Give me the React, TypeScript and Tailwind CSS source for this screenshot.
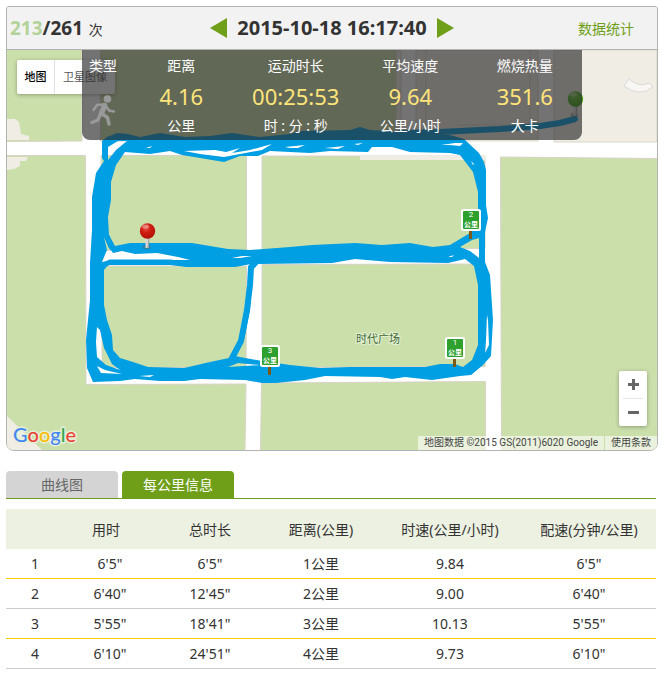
const stats = [
  { label: "距离", value: "4.16", unit: "公里" },
  { label: "运动时长", value: "00:25:53", unit: "时 : 分 : 秒" },
  { label: "平均速度", value: "9.64", unit: "公里/小时" },
  { label: "燃烧热量", value: "351.6", unit: "大卡" },
];

const laps = [
  ["1", `6'5"`, `6'5"`, "1公里", "9.84", `6'5"`],
  ["2", `6'40"`, `12'45"`, "2公里", "9.00", `6'40"`],
  ["3", `5'55"`, `18'41"`, "3公里", "10.13", `5'55"`],
  ["4", `6'10"`, `24'51"`, "4公里", "9.73", `6'10"`],
];

const ROUTE = "#009ee2";

function KmSign({ x, y, n }: { x: number; y: number; n: number }) {
  return (
    <g transform={`translate(${x} ${y})`}>
      <rect x="8" y="20" width="3" height="10" fill="#7a5a17" />
      <rect width="20" height="22" rx="2.5" fill="#fff" />
      <rect x="2" y="2" width="16" height="18" rx="1" fill="#2ea02e" />
      <text x="10" y="8" textAnchor="middle" fontSize="8" fill="#fff" className="font-['Roboto',sans-serif]">
        {n}
      </text>
      <text
        x="10"
        y="18"
        textAnchor="middle"
        fontSize="7"
        fill="#fff"
        className="font-['Noto_Sans_CJK_SC',sans-serif] font-bold"
      >
        公里
      </text>
    </g>
  );
}

function Pin({ x, y, fill }: { x: number; y: number; fill: string }) {
  return (
    <g transform={`translate(${x} ${y})`}>
      <ellipse cx="-1" cy="16" rx="4" ry="2.5" fill="#666" opacity=".45" />
      <path d="M-2 7h4l-1 10h-3z" fill="#d8d8d8" />
      <path d="M1 7h1l-1 10h-1z" fill="#999" />
      <circle r="7.7" fill={`url(#${fill})`} />
      <ellipse cx="-2" cy="-4.5" rx="3.5" ry="2" fill="#fff" opacity=".35" />
    </g>
  );
}

function Runner() {
  return (
    <svg viewBox="0 0 26 31" className="mt-3.5 h-[31px] w-[26px]" role="img" aria-label="跑步">
      <circle cx="17.500" cy="4" r="3.800" fill="#999" />
      <g fill="none" stroke="#999" strokeLinecap="round" strokeLinejoin="round">
        <path d="M14.500 10.500L11.500 18.500" strokeWidth="5.500" />
        <path d="M13.500 9.500L7 10L3.500 15" strokeWidth="2.600" />
        <path d="M16 11L19 15.500L24 16.500" strokeWidth="2.600" />
        <path d="M12 19L17.500 22.500L19 29" strokeWidth="3.400" />
        <path d="M10.500 19L8 25L2 27.500" strokeWidth="3.400" />
      </g>
    </svg>
  );
}

function MapArt() {
  return (
    <svg
      viewBox="7 50 650 400"
      preserveAspectRatio="xMidYMid slice"
      className="block h-[400px] w-full"
      aria-label="运动轨迹地图"
    >
      <defs>
        <radialGradient id="redPin" cx=".4" cy=".3" r=".7">
          <stop offset="0" stopColor="#e8584c" />
          <stop offset=".45" stopColor="#d01c10" />
          <stop offset="1" stopColor="#b01208" />
        </radialGradient>
        <radialGradient id="greenPin" cx=".4" cy=".3" r=".7">
          <stop offset="0" stopColor="#6cc83c" />
          <stop offset="1" stopColor="#3f9a14" />
        </radialGradient>
      </defs>

      <rect x="7" y="50" width="650" height="400" fill="#fff" />

      {/* city blocks */}
      <g fill="#cbdfab" stroke="#dad2c8">
        <path d="M6 49H82V141L6 141.500Z" />
        <path d="M6 155.500H85.500L86 384.500L246 384L245 451H6Z" />
        <path d="M100.500 49H396V141H100.500Z" />
        <path d="M101 155.500H246.500V250.500H101Z" />
        <path d="M262 156H485V248.500L262 249.500Z" />
        <path d="M102 266H246.500L246 367.500H102Z" />
        <path d="M262 264.500L485 264V366.500L262 367.500Z" />
        <path d="M261.500 383L485.500 381.500V451H260.500Z" />
        <path d="M500.500 157L658 158.500V451H501.500Z" />
      </g>
      <path d="M396 50H401V141H396ZM416 50H538V141H416ZM554 50H657V142H554Z" fill="#f0ede5" stroke="#ddd6ca" />
      <path d="M426 50V141M455 125H538M530 50V125" fill="none" stroke="#ded9cf" />
      <path d="M360 156H485V160H360Z" fill="#f0ede5" />
      <path d="M7 119H15L19 122L21 134L29 136V140H7Z" fill="#f0ede5" />
      <path d="M7 157H28L26 161H20L20 166L14 169L7 170Z" fill="#f0ede5" />
      <path d="M7 416L42 450H7Z" fill="#f0ede5" />
      <path d="M624 86L629 79Q639 88 649 83L653 87Q640 98 624 86Z" fill="#f8f7f3" stroke="#d9d9dc" />

      {/* recorded track */}
      <g fill={ROUTE}>
        <path
          fillRule="evenodd"
          d="M102 141L107 137L117 133L128 134L140 137L160 133L185 137L210 136L232 133L260 137L290 134L300 131L350 130L360 127L370 130L405 132L450 135L464 139L479 153L484 162L486 170V205L488 218L485 232V262L490 275L493 320L491 356L483 365L471 375L460 376L432 380L405 377L392 379L380 377L325 376L305 380L276 383H262L245 380L200 379L184 381H160L135 379L120 381L93 382L87 368L86 340L90 300V263L92 230V197L96 173L104 161L102 158Z
          M108 160L116 150L127 141H118L108 147Z
          M116 165L125 152L150 154L170 151L182 155L224 162L240 156H258L270 151L310 153L330 151L368 152L372 147H392L410 152L450 153L460 155L473 172L478 192V226L470 233L450 245L433 247L410 243L382 245L355 243L312 245L290 247L250 250L228 249L192 243H130L115 246L109 235L108 217L111 200V182Z
          M102 262L107 250L104 237L108 246L113 253L122 251L135 254L157 253L178 257L190 260H120L107 261Z
          M104 270L108 265H170L187 267H235L251 264L247 300L239 340L229 358L210 362L184 368L148 367L133 362L120 358L113 350L112 335L107 320L104 305Z
          M253 270L258 264L332 263L355 259L390 262L448 263L465 259L474 266L478 285V345L472 360L463 367L455 364H440L425 367H350L320 368L290 365L262 361L240 357L235 356L244 340L250 310Z
          M460 247L472 240L479 238L479 258L470 251Z
          M97 327L100 330L104 348L112 364L120 370L106 365L97 357L96 342Z
          M97 366L105 370L122 374L101 373Z
          M228 367L238 363L260 365Z
          M487 315L486 340L485 353L489 345L488 320Z"
        />
        <path
          fill="#fff"
          d="M184 151L215 150L226 152L240 148L232 153L250 150L272 144L262 150L240 154L224 157L200 154ZM146 148L152 146L150 148ZM285 147L305 145L298 148L290 148ZM325 148L345 146L338 149ZM354 144L363 143L358 145ZM441 145L455 143L463 143L460 146L450 145ZM232 258L242 256L252 256L240 258ZM448 257L454 255L452 257ZM471 161L474 164L473 165ZM139 376L154 375L150 377Z"
        />
      </g>
      <g fill="none" stroke={ROUTE} strokeWidth="6" strokeLinecap="round" strokeLinejoin="round">
        <path d="M400 133L440 132L500 129L540 126L560 123L575 119" />
        <path d="M256 262L251 267L250 285L247 310L241 341L231 360" />
        <path d="M106 264L110 262H170L187 264" strokeWidth="5" />
        <path d="M107 236L111 247L115 249" strokeWidth="5" />
      </g>

      <text
        x="378"
        y="343"
        textAnchor="middle"
        fontSize="11"
        fill="#3f6b35"
        stroke="#e4efd3"
        strokeWidth="2"
        paintOrder="stroke"
      >
        时代广场
      </text>

      <KmSign x={461} y={209} n={2} />
      <KmSign x={445} y={337} n={1} />
      <KmSign x={260} y={345} n={3} />
      <Pin x={147.5} y={231} fill="redPin" />
      <Pin x={575.5} y={99} fill="greenPin" />

      <text
        x="13"
        y="442"
        fontSize="20"
        className="font-['Lato',sans-serif] font-medium"
        stroke="#e6efd8"
        strokeWidth="3"
        strokeLinejoin="round"
        paintOrder="stroke"
      >
        <tspan fill="#4285f4">G</tspan>
        <tspan fill="#ea4335">o</tspan>
        <tspan fill="#fbbc05">o</tspan>
        <tspan fill="#4285f4">g</tspan>
        <tspan fill="#34a853">l</tspan>
        <tspan fill="#ea4335">e</tspan>
      </text>
    </svg>
  );
}

export default function App() {
  return (
    <main className="bg-white pt-1.5 pr-[9px] pl-1.5 font-['Noto_Sans','Noto_Sans_CJK_SC',sans-serif] text-sm text-[#333]">
      <section className="overflow-hidden rounded-t-[3px] rounded-b-lg border border-[#b3b3b3]">
        <header className="grid h-[43px] grid-cols-[1fr_auto_1fr] items-center border-b border-[#b3b3b3] bg-[#f2f2f2]">
          <p className="pl-[3px] whitespace-nowrap">
            <strong className="text-[19px] leading-6">
              <span className="text-[#b3d299]">213</span>/261
            </strong>{" "}
            <span className="ml-0.5">次</span>
          </p>
          <div className="flex items-center gap-2.5">
            <button type="button" aria-label="上一次">
              <svg viewBox="0 0 17 20" className="block h-5 w-[17px]">
                <path d="M17 0V20L0 10Z" fill="#6f9f18" />
              </svg>
            </button>
            <h1 className="text-[20px] leading-6 font-bold">2015-10-18 16:17:40</h1>
            <button type="button" aria-label="下一次">
              <svg viewBox="0 0 17 20" className="block h-5 w-[17px]">
                <path d="M0 0V20L17 10Z" fill="#6f9f18" />
              </svg>
            </button>
          </div>
          <a href="#stats" className="justify-self-end pt-0.5 pr-[23px] text-[#6f9f18]">
            数据统计
          </a>
        </header>

        <div className="relative">
          <MapArt />

          <div className="absolute top-2.5 left-2.5 flex h-[34px] rounded-xs bg-white text-[11px] shadow-[0_1px_4px_rgba(0,0,0,0.3)]">
            <button type="button" className="w-[38px] border-r border-[#e2e2e2] font-medium text-black">
              地图
            </button>
            <button type="button" className="w-[60px] text-[#565656]">
              卫星图像
            </button>
          </div>

          <div className="absolute inset-x-0 top-0 mx-auto grid h-[90px] w-[500px] grid-cols-[42px_repeat(4,1fr)] rounded-b-lg bg-[rgba(40,40,40,0.65)] text-center leading-[30px] text-white">
            <div className="flex flex-col items-center">
              <span className="pt-px">类型</span>
              <Runner />
            </div>
            {stats.map((s) => (
              <dl key={s.label} className="pt-px">
                <dt>{s.label}</dt>
                <dd className="text-[22px] text-[#ffe47a]">{s.value}</dd>
                <dd>{s.unit}</dd>
              </dl>
            ))}
          </div>

          <div className="absolute right-2.5 bottom-6 flex w-7 flex-col rounded-xs bg-white px-1 shadow-[0_1px_4px_rgba(0,0,0,0.3)]">
            <button type="button" aria-label="放大" className="flex h-7 items-center justify-center border-b border-[#e6e6e6]">
              <svg viewBox="0 0 11 11" className="size-[11px]">
                <path d="M4 0H7V4H11V7H7V11H4V7H0V4H4Z" fill="#666" />
              </svg>
            </button>
            <button type="button" aria-label="缩小" className="flex h-[27px] items-center justify-center">
              <svg viewBox="0 0 11 11" className="size-[11px]">
                <path d="M0 4H11V7H0Z" fill="#666" />
              </svg>
            </button>
          </div>

          <div className="absolute right-0 bottom-0 flex gap-px font-['Roboto','Noto_Sans_CJK_SC',sans-serif] text-[10px] leading-[14px] whitespace-nowrap text-[#444]">
            <span className="bg-white/60 px-1.5">地图数据 ©2015 GS(2011)6020 Google</span>
            <a href="#terms" className="bg-white/60 px-1.5">
              使用条款
            </a>
          </div>
        </div>
      </section>

      <section className="mt-5 mr-0.5">
        <div className="flex gap-1 border-b border-[#6f9f18]" role="tablist">
          <button type="button" role="tab" aria-selected="false" className="h-[27px] w-28 rounded-t-sm bg-[#d4d4d4] text-[#666]">
            曲线图
          </button>
          <button type="button" role="tab" aria-selected="true" className="h-[27px] w-28 rounded-t-sm bg-[#6f9f18] text-white">
            每公里信息
          </button>
        </div>

        <table className="mt-2.5 w-full table-fixed border-separate border-spacing-0 text-center">
          <colgroup>
            <col className="w-[58px]" />
            <col className="w-[92px]" />
            <col className="w-[108px]" />
            <col className="w-[114px]" />
            <col className="w-[144px]" />
            <col className="w-[134px]" />
          </colgroup>
          <thead>
            <tr className="h-10 bg-[#edf1e2] whitespace-nowrap [&>th]:p-0 [&>th]:pt-0.5 [&>th]:font-normal">
              <th aria-label="序号" />
              <th>
                <span className="mr-2">用时</span>
              </th>
              <th>总时长</th>
              <th>距离(公里)</th>
              <th>时速(公里/小时)</th>
              <th>配速(分钟/公里)</th>
            </tr>
          </thead>
          <tbody>
            {laps.map((lap, row) => (
              <tr key={lap[0]} className="h-[30px]">
                {lap.map((cell, i) => (
                  <td key={i} className={`border-b p-0 ${row % 2 === 0 ? "border-[#ffcc00]" : "border-[#cccccc]"}`}>
                    {cell}
                  </td>
                ))}
              </tr>
            ))}
          </tbody>
        </table>
      </section>
    </main>
  );
}
